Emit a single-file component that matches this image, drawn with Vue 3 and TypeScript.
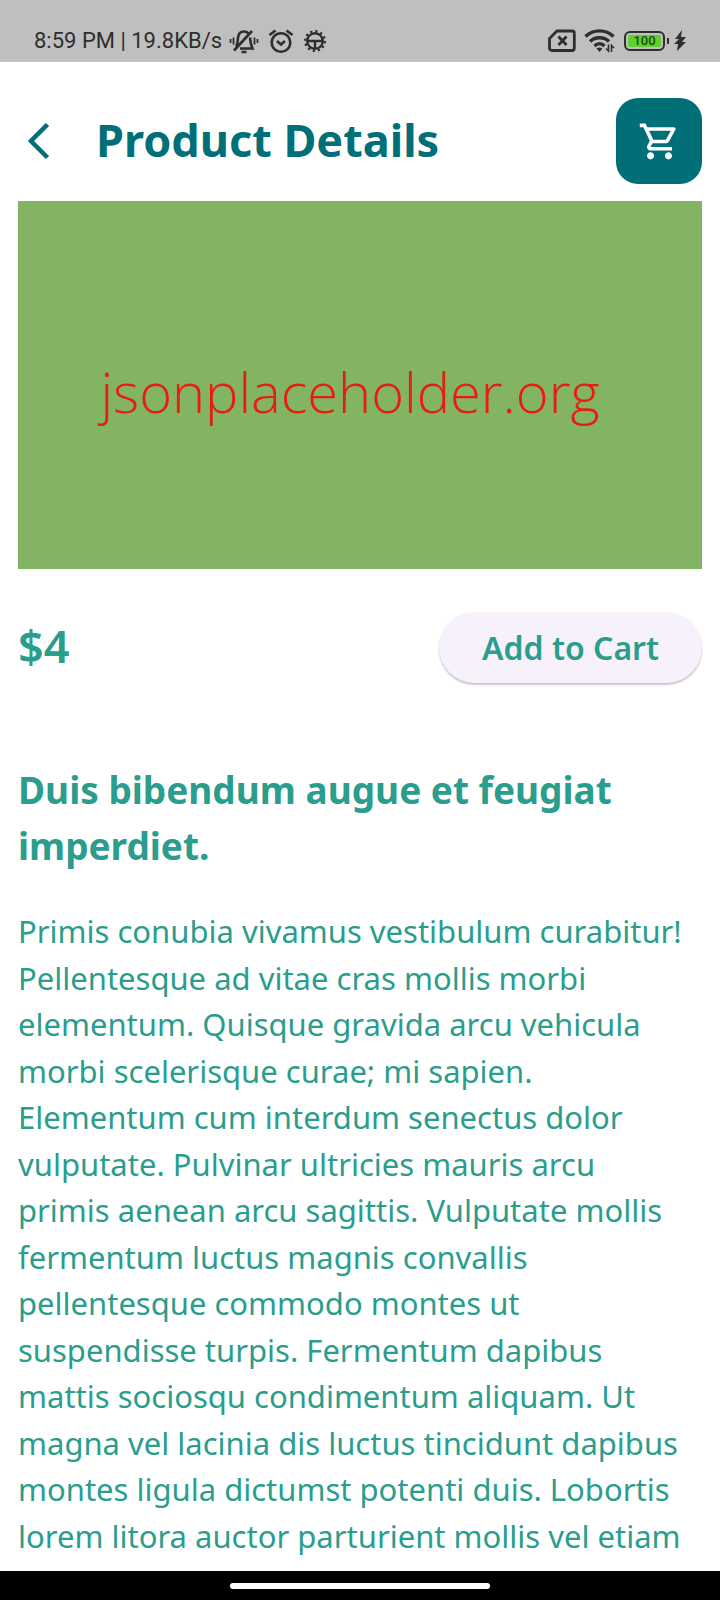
<script setup lang="ts">
const description = `Primis conubia vivamus vestibulum curabitur!
Pellentesque ad vitae cras mollis morbi
elementum. Quisque gravida arcu vehicula
morbi scelerisque curae; mi sapien.
Elementum cum interdum senectus dolor
vulputate. Pulvinar ultricies mauris arcu
primis aenean arcu sagittis. Vulputate mollis
fermentum luctus magnis convallis
pellentesque commodo montes ut
suspendisse turpis. Fermentum dapibus
mattis sociosqu condimentum aliquam. Ut
magna vel lacinia dis luctus tincidunt dapibus
montes ligula dictumst potenti duis. Lobortis
lorem litora auctor parturient mollis vel etiam`

const product = {
  image: 'jsonplaceholder.org',
  price: '$4',
  title: 'Duis bibendum augue et feugiat\nimperdiet.',
}
const battery = 100
</script>

<template>
  <div class="screen">
    <div class="status">
      <div class="group">
        <span class="clock">8:59 PM | 19.8KB/s</span>
        <svg class="muted" width="30" height="26" viewBox="0 0 30 26" fill="none" stroke="#2e2e2e" stroke-width="2.600">
          <path d="M7 18.500C9 16 8.500 13 9 9.500C9.500 5.500 12 3.500 15 3.500C17 3.500 18.500 4.300 19.500 5.500M21 9.500C21.500 14 21.500 16 23.500 20.500H11M5 22.500L23 3M12.500 24H17.500" />
          <path d="M4.500 9.500V16.500M1.500 11V15M25.500 9.500V16.500M28.500 11V15" stroke-width="1.800" />
        </svg>
        <svg width="26" height="26" viewBox="0 0 26 26" fill="none" stroke="#2e2e2e" stroke-width="2.600">
          <circle cx="13" cy="14.500" r="9.300" />
          <path d="M1.500 7L7.500 2.500M24.500 7L18.500 2.500M9 13L13 16.500L17 13" />
        </svg>
        <svg width="24" height="26" viewBox="0 0 24 26" fill="none" stroke="#2e2e2e" stroke-width="2.400">
          <circle cx="12" cy="13" r="7.800" />
          <circle cx="12" cy="13" r="9.800" stroke-width="2.400" stroke-dasharray="2.200 2.930" />
          <path d="M4 13H20M12 13V21" />
        </svg>
      </div>
      <div class="group right">
        <svg width="28" height="24" viewBox="0 0 28 24" fill="none" stroke="#2e2e2e" stroke-width="2.800">
          <path d="M9 2H24C25.500 2 26.300 2.800 26.300 4V19C26.300 20.500 25.500 21.500 24 21.500H4C2.500 21.500 1.500 20.500 1.500 19V9.500Z" />
          <path d="M10.500 7.500L18.500 16M18.500 7.500L10.500 16" stroke-width="2.800" />
        </svg>
        <svg width="32" height="24" viewBox="0 0 32 24" fill="none" stroke="#2e2e2e" stroke-width="3.400">
          <path d="M1.500 7.500C9 0 22 0 29.500 7.500M6 12.500C11 7.500 20 7.500 25 12.500M10.500 17C13.500 14 17.500 14 20.500 17" />
          <path d="M12.500 19.500Q15.500 17.500 18.500 19.500L15.500 23Z" fill="#2e2e2e" stroke="none" />
          <path d="M24.500 15.500V22L22 19.500M27.500 23V16.500L30 19" stroke-width="1.600" />
        </svg>
        <span class="battery"><span class="charge">{{ battery }}</span></span>
        <svg width="12" height="22" viewBox="0 0 12 22" fill="#2e2e2e">
          <path d="M8 0L1 9H5L0 14H4L3 21L12 12H8L12 7H7Z" />
        </svg>
      </div>
    </div>

    <main class="page">
      <header class="top">
        <button class="back" type="button" aria-label="Back">
          <svg width="22" height="36" viewBox="0 0 22 36" fill="none" stroke="#006f78" stroke-width="4.500">
            <path d="M19.500 1.500L3 18L19.500 34.500" />
          </svg>
        </button>
        <h1>Product Details</h1>
        <button class="cart" type="button" aria-label="Cart">
          <svg width="43" height="43" viewBox="0 0 24 24" fill="#fff">
            <path d="M15.550 13c.75 0 1.410-.41 1.750-1.030l3.580-6.490A.996.996 0 0 0 20.010 4H5.210l-.94-2H1v2h2l3.600 7.590-1.350 2.440C4.520 15.370 5.480 17 7 17h12v-2H7l1.100-2h7.450zM6.160 6h12.150l-2.760 5H8.530L6.160 6zM7 18c-1.100 0-1.990.9-1.990 2S5.900 22 7 22s2-.9 2-2-.9-2-2-2zm10 0c-1.100 0-1.990.9-1.990 2s.89 2 1.990 2 2-.9 2-2-.9-2-2-2z" />
          </svg>
        </button>
      </header>

      <div class="picture"><span>{{ product.image }}</span></div>

      <div class="buy">
        <span class="price">{{ product.price }}</span>
        <button class="add" type="button">Add to Cart</button>
      </div>

      <h2>{{ product.title }}</h2>
      <p class="description">{{ description }}</p>
    </main>

    <div class="nav"><span class="handle"></span></div>
  </div>
</template>

<style>
body {
  margin: 0;
}
</style>

<style scoped>
.screen {
  display: flex;
  flex-direction: column;
  height: 100vh;
  overflow: hidden;
  background: #fff;
  color: #2a9d8c;
  font-family: "Noto Sans", "Open Sans", sans-serif;
}
.status {
  display: flex;
  flex: none;
  justify-content: space-between;
  align-items: flex-end;
  box-sizing: border-box;
  height: 62px;
  padding: 0 34px 7px;
  background: #bfbfbf;
  color: #2e2e2e;
}
.group {
  display: flex;
  align-items: center;
  gap: 9px;
  height: 28px;
}
.group.right {
  gap: 8px;
}
.clock {
  font: 22px/28px Roboto, sans-serif;
}
.muted {
  margin-left: -2px;
}
.battery {
  position: relative;
  box-sizing: border-box;
  width: 41px;
  height: 20px;
  margin-right: 1px;
  padding: 2px;
  border: 2px solid #2e2e2e;
  border-radius: 6px;
}
.battery::after {
  content: "";
  position: absolute;
  top: 5px;
  right: -6px;
  width: 2px;
  height: 6px;
  background: #2e2e2e;
}
.charge {
  display: block;
  border-radius: 2px;
  background: #5fd02f;
  color: #1f4a14;
  font: 500 13px/12px Roboto, sans-serif;
  text-align: center;
}
.page {
  flex: 1;
  min-height: 0;
  overflow: hidden;
  padding: 36px 18px 0;
}
.top {
  display: flex;
  align-items: center;
  margin-bottom: 17px;
}
button {
  border: 0;
  font-family: inherit;
  cursor: pointer;
}
.back {
  display: flex;
  padding: 0 10px;
  background: none;
}
h1 {
  flex: 1;
  margin: 0 0 2px 36px;
  color: #006f78;
  font-size: 45px;
  line-height: 60px;
  font-weight: 700;
}
.cart {
  display: grid;
  place-items: center;
  width: 86px;
  height: 86px;
  padding: 0;
  border-radius: 22px;
  background: #006f78;
}
.picture {
  display: grid;
  place-items: center;
  box-sizing: border-box;
  aspect-ratio: 684 / 368;
  padding: 12px 20px 0 0;
  background: #82b464;
  color: #e81c10;
  font: 300 56px/72px "Open Sans", sans-serif;
}
.buy {
  display: flex;
  justify-content: space-between;
  align-items: center;
  margin: 43px 0 79px;
}
.price {
  padding-bottom: 4px;
  font-size: 45px;
  line-height: 60px;
  font-weight: 600;
}
.add {
  padding: 14px 43px;
  border-radius: 36px;
  background: #f6f1fa;
  box-shadow: 0 2px 2px #c9c5cd;
  color: inherit;
  font-size: 32px;
  line-height: 43px;
  font-weight: 600;
}
h2 {
  margin: 0;
  font-size: 37px;
  line-height: 56px;
  font-weight: 700;
  white-space: pre-line;
}
.description {
  margin: 34px 0 0;
  font-size: 31px;
  line-height: 1.5;
  white-space: pre-line;
}
.nav {
  display: grid;
  flex: none;
  place-items: center;
  height: 29px;
  background: #000;
}
.handle {
  width: 36%;
  height: 6px;
  border-radius: 3px;
  background: #fff;
}
</style>
